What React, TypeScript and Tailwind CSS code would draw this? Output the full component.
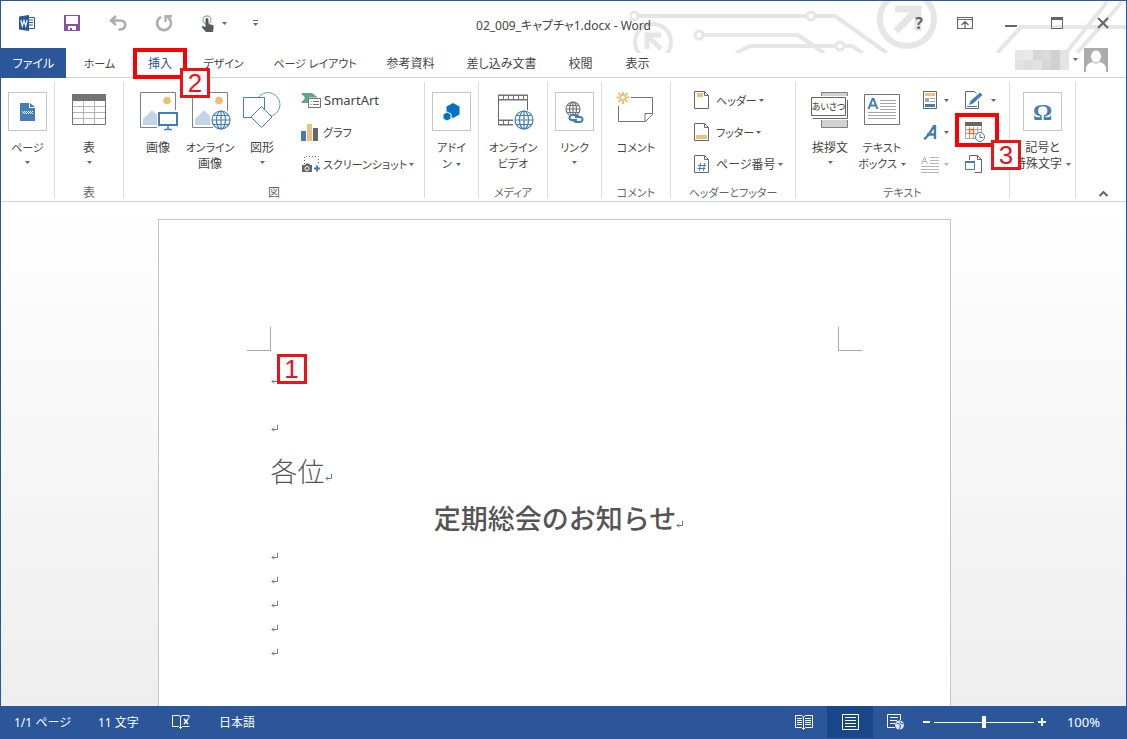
import React from "react";

type Kids = { children?: React.ReactNode };

const Caret = ({ color = "#666" }: { color?: string }) => (
  <svg width="5" height="3" viewBox="0 0 5 3" className="inline-block shrink-0" aria-hidden="true">
    <path d="M0 0h5L2.500 3z" fill={color} />
  </svg>
);

const Icon = ({ w, h, children }: Kids & { w: number; h: number }) => (
  <svg width={w} height={h} viewBox={`0 0 ${w} ${h}`} fill="none" className="shrink-0" aria-hidden="true">
    {children}
  </svg>
);

const Globe = ({ x, y, r, color }: { x: number; y: number; r: number; color: string }) => (
  <g stroke={color} strokeWidth="1.2" transform={`translate(${x} ${y})`}>
    <circle r={r} fill="#fff" />
    <ellipse rx={r * 0.5} ry={r} />
    <path d={`M0 ${-r}V${r}M${-r} 0H${r}M${-r * 0.85} ${-r * 0.5}H${r * 0.85}M${-r * 0.85} ${r * 0.5}H${r * 0.85}`} />
  </g>
);

const Photo = () => (
  <>
    <path d="M1.500.500h35v35h-35z" fill="#fff" stroke="#808080" />
    <circle cx="28" cy="8.500" r="3.800" fill="#ebbf74" />
    <path d="M4 33V27l9-9 10 10 3-3 6 8z" fill="#c2d4e8" />
  </>
);

/* ---------- quick access and window icons ---------- */

const WordLogo = () => (
  <Icon w={16} h={16}>
    <path d="M8 2.500h7.500v11H8" fill="#fff" stroke="#2b579a" />
    <path d="M10 5h4M10 7.500h4M10 10h4" stroke="#2b579a" />
    <path d="M0 1.500 10 0v16L0 14.500z" fill="#2b579a" />
    <path d="m1.800 5 1.500 6L5 5.500 6.700 11l1.500-6" stroke="#fff" strokeWidth="1.200" />
  </Icon>
);

const SaveIcon = () => (
  <Icon w={16} h={16}>
    <path d="M0 0h16v16H0z" fill="#8553a5" />
    <path d="M2 1h12v8H2zM4 11h8v4H4z" fill="#fff" />
    <path d="M6 13h2v2H6z" fill="#8553a5" />
  </Icon>
);

const UndoIcon = () => (
  <Icon w={18} h={16}>
    <path d="M7 1 2 5.500 7 10M2 5.500h9c7 0 7 8 0 9H9.500" stroke="#adadad" strokeWidth="2.600" />
  </Icon>
);

const RedoIcon = () => (
  <Icon w={18} h={18}>
    <path d="M6 2.800A7 7 0 1 0 12.500 3" stroke="#adadad" strokeWidth="2.600" />
    <path d="M10.500 8V2.200H17" stroke="#adadad" strokeWidth="2.200" />
  </Icon>
);

const TouchIcon = () => (
  <Icon w={16} h={17}>
    <circle cx="7" cy="5" r="4" stroke="#8bb4d9" strokeWidth="1.400" />
    <path d="M5.500 4.500a1.500 1.500 0 0 1 3 0V9l4 1q1.500.5 1.200 2L13 17H6l-4.500-5 1.200-1 2.800 1z" fill="#595959" />
  </Icon>
);

const Circuit = () => (
  <svg width="497" height="53" viewBox="0 0 497 53" fill="none" stroke="#e6e6e6" strokeWidth="4" className="pointer-events-none absolute -top-px -right-px" aria-hidden="true">
    <path d="M8 16h197l52 37M73 35h95l26 18M106 53l14-7h85M215 46h7l11 7M367 53l24-26h106M477 2l-41 51M492 2l-45 51" />
    <g fill="#fff" strokeWidth="3">
      <circle cx="4" cy="16" r="4" />
      <circle cx="181" cy="16" r="4" />
      <circle cx="69" cy="35" r="4" />
      <circle cx="210" cy="46" r="4" />
    </g>
    <circle cx="277" cy="19" r="27" fill="#fff" strokeWidth="6" />
    <path d="m266 31 21-21" strokeWidth="7" />
    <path d="M265 9h23v22" strokeWidth="7" />
    <circle cx="23" cy="42" r="18" fill="#fff" />
    <path d="M31 49 18 36M17 49V35h14" strokeWidth="5" />
    <path d="M496.500 0v53M0 .500h497" stroke="#2b579a" strokeWidth="1" />
  </svg>
);

/* ---------- ribbon icons ---------- */

const Framed = ({ children }: Kids) => (
  <span className="flex size-[39px] items-center justify-center border border-[#c6c6c6]">{children}</span>
);

const PageIcon = () => (
  <Framed>
    <Icon w={15} h={18}>
      <path d="M0 0h9v5h6v13H0z" fill="#447cb5" />
      <path d="m10 0 5 4h-5z" fill="#447cb5" />
      <path d="M2 8.500h11M2 10.500h11" stroke="#fff" strokeDasharray="1 1" />
      <path d="M3 9.500h9" stroke="#fff" strokeDasharray="1 1" />
    </Icon>
  </Framed>
);

const TableIcon = () => (
  <Icon w={34} h={40}>
    <path d="M.5 8.500h33v24H.5z" stroke="#737373" />
    <path d="M0 2h34v7H0z" fill="#737373" />
    <path d="M11.500 9v23M22.500 9v23M1 14.500h32M1 20.500h32M1 26.500h32" stroke="#b5b5b5" />
  </Icon>
);

const PictureIcon = () => (
  <Icon w={42} h={40}>
    <g transform="translate(2)">
      <Photo />
      <path d="M18 18h22v21H18z" fill="#fff" />
      <path d="M20 21h18v12H20z" stroke="#447cb5" strokeWidth="2" />
      <path d="M29 34v4M25 37.500h8" stroke="#447cb5" strokeWidth="1.500" />
    </g>
  </Icon>
);

const OnlinePictureIcon = () => (
  <Icon w={42} h={40}>
    <g transform="translate(2)">
      <Photo />
      <circle cx="30" cy="28" r="11" fill="#fff" />
      <Globe x={30} y={28} r={9} color="#447cb5" />
    </g>
  </Icon>
);

const ShapesIcon = () => (
  <Icon w={38} h={40}>
    <circle cx="25" cy="12.500" r="12" stroke="#6c9bca" fill="#fff" />
    <path d="M.5 5.500h21v20H.5z" fill="#fff" stroke="#447cb5" />
    <path d="M18.500 14.500 29 25 18.500 35.500 8 25z" fill="#fff" stroke="#447cb5" />
  </Icon>
);

const AddinIcon = () => (
  <Framed>
    <Icon w={17} h={18}>
      <path d="m10 0 6.500 3.500v8L10 15l-6.500-3.500v-8z" fill="#0072c6" />
      <path d="m4 9 4 2v5l-4 2-4-2v-5z" fill="#0072c6" stroke="#fff" />
    </Icon>
  </Framed>
);

const VideoIcon = () => (
  <Icon w={42} h={40}>
    <g transform="translate(6)">
      <path d="M.5 3v28M29.500 3v16" stroke="#666" />
      <path d="M0 2.500h30v6H0zM0 27.500h15v6H0z" fill="#737373" />
      <path d="M1 5.500h28M1 30.500h14" stroke="#fff" strokeWidth="3" strokeDasharray="4 1" />
      <circle cx="26" cy="28" r="10.500" fill="#fff" />
      <Globe x={26} y={28} r={9} color="#447cb5" />
    </g>
  </Icon>
);

const LinkIcon = () => (
  <Framed>
    <Icon w={20} h={22}>
      <Globe x={8} y={8} r={7} color="#737373" />
      <path d="M4 13h15v9H4z" fill="#fff" />
      <path d="M12 19H7a2.500 2.500 0 0 1 0-5h4a2.500 2.500 0 0 1 2.500 2M10 16h5a2.500 2.500 0 0 1 0 5h-4a2.500 2.500 0 0 1-2.500-2" stroke="#447cb5" strokeWidth="2" />
    </Icon>
  </Framed>
);

const CommentIcon = () => (
  <Icon w={40} h={40}>
    <path d="M15 5.500h21.500v17l-7 7H2.500V14M36 21.500h-7v8" stroke="#737373" />
    <path d="M7 -1v4M7 8v4M.5 5.500h4M9.500 5.500h4M2.500 1l3 3M8.500 7l3 3M11.500 1l-3 3M5.500 7l-3 3" stroke="#ebbf74" strokeWidth="2" />
    <circle cx="7" cy="5.500" r="2.500" fill="#fff" stroke="#ebbf74" strokeWidth="1.500" />
  </Icon>
);

const GreetingIcon = () => (
  <Icon w={38} h={40}>
    <path d="M10.500.500h26v35h-26z" fill="#d2d2d2" stroke="#808080" />
    <path d="M0 4h38v24H0z" fill="#fff" />
    <path d="M.5 5.500h34v18H.5z" stroke="#666" />
    <path d="M36.500 8v18.500H2" stroke="#666" />
    <text x="17.500" y="18" textAnchor="middle" fontSize="9" fill="#333">あいさつ</text>
  </Icon>
);

const TextBoxIcon = () => (
  <Icon w={37} h={40}>
    <path d="M.5 2.500h35v30H.5z" stroke="#737373" />
    <path d="m4.500 17 4-10h1l4 10M6 13.500h6" stroke="#447cb5" strokeWidth="2" />
    <path d="M16 8.500h16M16 11.500h16M16 14.500h16M16 17.500h16M4 20.500h28M4 23.500h28M4 26.500h28" stroke="#a6a6a6" />
  </Icon>
);

const OmegaIcon = () => (
  <Framed>
    <span className="font-['Liberation_Serif',serif] text-2xl leading-none font-bold text-[#447cb5]">Ω</span>
  </Framed>
);

const SmartArtIcon = () => (
  <Icon w={20} h={16}>
    <path d="M0 1h11l6 4.500H8V11H0l4-5z" fill="#5fa68c" />
    <path d="M7.500 6.500h12v9h-12z" fill="#fff" stroke="#737373" />
    <path d="M9.500 9.500h1M12 9.500h6M9.500 12.500h1M12 12.500h6" stroke="#737373" />
  </Icon>
);

const ChartIcon = () => (
  <Icon w={18} h={18}>
    <path d="M0 8h5v10H0z" fill="#447cb5" />
    <path d="M6 1h5v17H6z" fill="#e9c280" />
    <path d="M12 5h5v13h-5z" fill="#666" />
  </Icon>
);

const ScreenshotIcon = () => (
  <Icon w={20} h={18}>
    <path d="M3.500 9V1.500h14V10" stroke="#666" strokeDasharray="1 2" />
    <path d="M1 10h3l1-1.500h3L9 10h2v7H1z" fill="#666" />
    <circle cx="6" cy="13.500" r="2" stroke="#fff" />
    <path d="M13 13.500h6M16 10.500v6" stroke="#447cb5" strokeWidth="2" />
  </Icon>
);

const SheetIcon = ({ children }: Kids) => (
  <Icon w={15} h={18}>
    <path d="M.5.500h10l4 4v13H.5zM10.500.500v4h4" fill="#fff" stroke="#666" />
    {children}
  </Icon>
);

const HeaderIcon = () => <SheetIcon><path d="M3 2h6v4H3z" fill="#e9c280" /></SheetIcon>;
const FooterIcon = () => <SheetIcon><path d="M2 12h11v4H2z" fill="#e9c280" /></SheetIcon>;
const NumberIcon = () => (
  <SheetIcon><path d="m6.500 8-1 8M10.500 8l-1 8M4 10.500h8M3.500 13.500h8" stroke="#447cb5" /></SheetIcon>
);

const PartsIcon = () => (
  <Icon w={14} h={18}>
    <path d="M.5.500h13v17H.5z" fill="#fff" stroke="#666" />
    <path d="M2 2h10v3H2z" fill="#e9c280" />
    <path d="M2 7h4v4H2z" fill="#a6a6a6" />
    <path d="M7 7.500h5M7 10.500h5" stroke="#a6a6a6" />
    <path d="M2 13h10v3H2z" fill="#447cb5" />
  </Icon>
);

const WordArtIcon = () => (
  <Icon w={14} h={15}>
    <path d="M1 14C5 12 9 4 11 1h1v13M4 9.500h8" stroke="#447cb5" strokeWidth="2.400" />
  </Icon>
);

const DropCapIcon = () => (
  <Icon w={18} h={17}>
    <path d="m.5 8 3-7 3 7M1.500 5.500h4M9 1.500h9M9 4.500h9M9 7.500h9M0 10.500h18M0 13.500h18M0 16.500h18" stroke="#b5b5b5" />
  </Icon>
);

const SignatureIcon = () => (
  <Icon w={20} h={18}>
    <path d="M13.500 10v7.500H.5V.500h9l2 2" fill="#fff" stroke="#666" />
    <path d="m4 14 1.500-4L15 1.500l2.500 2.500L8 12.500z" fill="#447cb5" />
    <path d="M2 15.500h10" stroke="#447cb5" />
  </Icon>
);

const DateIcon = () => (
  <Icon w={20} h={20}>
    <path d="M.5.500h16v16H.5z" fill="#fff" stroke="#a6a6a6" />
    <path d="M0 0h17v4H0z" fill="#666" />
    <path d="M4.500 5v11M8.500 5v11M12.500 5v11M1 7.500h15M1 11.500h15" stroke="#a6a6a6" />
    <path d="M4.500 7.500h4v4h-4z" fill="#fff" stroke="#d8762d" strokeWidth="1.500" />
    <circle cx="15" cy="15" r="4.500" fill="#fff" stroke="#447cb5" />
    <path d="M15 12v3.500h3" stroke="#666" />
  </Icon>
);

const ObjectIcon = () => (
  <Icon w={20} h={18}>
    <path d="M4.500 5V.500h8l4 4v13h-7M12.500.500v4h4" stroke="#666" />
    <path d="M-.500 6.500h10v8h-10z" fill="#fff" />
    <path d="M.5 6.500h9v8h-9z" fill="#fff" stroke="#447cb5" />
    <path d="M0 6h10v2H0z" fill="#447cb5" />
  </Icon>
);

/* ---------- building blocks ---------- */

/* Labels written only in kana are set a size smaller than those with kanji. */
const isKana = (s: string) => /^[\u3040-\u30ff ]+$/.test(s);
const labelSize = (s: string) => (isKana(s) ? "text-[11px]" : "text-xs");

const Group = ({ width, label = "", children }: Kids & { width: string; label?: string }) => (
  <section className={`flex h-29 shrink-0 flex-col justify-between border-r border-[#dcdcdc] ${width}`}>
    <div className="flex">{children}</div>
    <div className={`text-center whitespace-nowrap text-[#666] ${labelSize(label)}`}>
      <span className="block h-3 leading-[14px]">{label}</span>
    </div>
  </section>
);

const Big = ({ icon, lines, caret, width = "w-full" }: { icon: React.ReactNode; lines: string[]; caret?: boolean; width?: string }) => (
  <button className={`flex shrink-0 flex-col items-center pt-2.5 ${width}`}>
    <span className="mb-2 flex h-10 items-start justify-center">{icon}</span>
    {lines.map((line, i) => (
      <span key={line} className={`flex h-4 items-center justify-center gap-1 whitespace-nowrap ${labelSize(line)}`}>
        {line}
        {caret && i === 1 && <Caret />}
      </span>
    ))}
    {caret && lines.length === 1 && <span className="flex h-3 items-center"><Caret /></span>}
  </button>
);

const Row = ({ icon, label, caret }: { icon: React.ReactNode; label: string; caret?: boolean }) => (
  <button className={`flex h-8 items-center whitespace-nowrap ${labelSize(label)}`}>
    <span className="flex w-[22px]">{icon}</span>
    <span className="pt-0.5">{label}</span>
    {caret && <span className="ml-0.5 flex"><Caret /></span>}
  </button>
);

const Small = ({ icon, label, caret, faded, gap = "ml-1", children }: Kids & { icon: React.ReactNode; label: string; caret?: boolean; faded?: boolean; gap?: string }) => (
  <button aria-label={label} className="relative flex h-8 items-center">
    <span className="flex w-5 justify-center">{icon}</span>
    {caret && <span className={`flex ${gap}`}><Caret color={faded ? "#b5b5b5" : "#666"} /></span>}
    {children}
  </button>
);

const Badge = ({ n, place }: { n: number; place: string }) => (
  <span className={`absolute z-20 flex size-[30px] items-center justify-center border-[3px] border-[#e8141c] bg-white font-['Liberation_Sans',sans-serif] text-[26px] leading-none text-[#e8141c] ${place}`}>
    {n}
  </span>
);

const Return = () => (
  <svg width="8" height="8" viewBox="0 0 8 8" fill="none" stroke="#777" className="inline-block shrink-0" aria-hidden="true">
    <path d="M6.500 0v4.500H1M3 2.500 1 4.500 3 6.500" />
  </svg>
);

const tabs: [string, string][] = [
  ["ホーム", "w-[67px]"],
  ["挿入", "w-[54px]"],
  ["デザイン", "w-[73px]"],
  ["ページ レイアウト", "w-[110px]"],
  ["参考資料", "w-[81px]"],
  ["差し込み文書", "w-[101px]"],
  ["校閲", "w-[57px]"],
  ["表示", "w-[57px]"],
];

const mosaic = [
  "bg-[#e6e6e6]", "bg-[#e9e9e9]", "bg-[#d6d6d6]", "bg-[#dadada]", "bg-[#d0d0d0]", "bg-[#e4e4e4]",
  "bg-[#e2e2e2]", "bg-[#dedede]", "bg-[#e2e2e2]", "bg-[#d6d6d6]", "bg-[#d0d0d0]", "bg-[#e4e4e4]",
];

const qat = "flex w-[46px] items-center justify-center";

export default function App() {
  return (
    <div className="flex min-h-screen flex-col border border-[#2b579a] bg-white font-['Noto_Sans','Noto_Sans_CJK_JP',sans-serif] text-xs text-[#444] [font-feature-settings:'palt']">
      <header className="relative">
        <Circuit />
        <div className="relative grid h-[47px] grid-cols-[1fr_auto_1fr]">
          <div className="flex pb-[3px] pl-[3px]">
            <span className="flex w-[45px] items-center justify-center"><WordLogo /></span>
            <button aria-label="上書き保存" className={qat}><SaveIcon /></button>
            <button aria-label="元に戻す" className={qat}><UndoIcon /></button>
            <button aria-label="繰り返し" className={qat}><RedoIcon /></button>
            <button aria-label="タッチ/マウス モードの切り替え" className="flex w-13 items-center justify-center gap-1.5"><TouchIcon /><Caret /></button>
            <button aria-label="クイック アクセス ツール バーのユーザー設定" className="flex w-8 flex-col items-center justify-center gap-0.5">
              <span className="h-px w-[5px] bg-[#666]" /><Caret />
            </button>
          </div>
          <h1 className="self-center pt-0.5">02_009_キャプチャ1.docx - Word</h1>
          <div className="flex justify-end pb-[3px] text-[#666]">
            <button aria-label="ヘルプ" className={`${qat} text-base font-bold`}>?</button>
            <button aria-label="リボンの表示オプション" className={qat}>
              <Icon w={16} h={12}><path d="M.5.500h15v11H.5zM.5 2.500h15M8 12V5M4.500 8 8 4.500 11.500 8" stroke="#666" strokeWidth="1.200" /></Icon>
            </button>
            <button aria-label="最小化" className={qat}><Icon w={12} h={8}><path d="M0 7h12" stroke="#666" strokeWidth="2" /></Icon></button>
            <button aria-label="最大化" className={qat}><Icon w={12} h={12}><path d="M.5 1v10.500h11V1" stroke="#666" /><path d="M0 1.500h12" stroke="#666" strokeWidth="3" /></Icon></button>
            <button aria-label="閉じる" className={qat}><Icon w={12} h={12}><path d="m1 1 10 10M11 1 1 11" stroke="#666" strokeWidth="2" /></Icon></button>
          </div>
        </div>

        <nav className="relative flex h-[30px] items-stretch border-b border-[#d4d4d4]" role="tablist">
          <button role="tab" className="-mb-px w-[65px] bg-[#2b579a] pt-0.5 text-white">ファイル</button>
          {tabs.map(([name, width]) => (
            <button key={name} role="tab" aria-selected={name === "挿入"} className={`relative shrink-0 pt-[3px] whitespace-nowrap ${labelSize(name)} ${width} ${name === "挿入" ? "text-[#2b579a]" : ""}`}>
              {name}
              {name === "挿入" && (
                <>
                  <span className="absolute inset-x-0 top-0 -bottom-0.5 z-10 border-4 border-[#fe0000]" />
                  <Badge n={2} place="top-5 left-[47px]" />
                </>
              )}
            </button>
          ))}
          <button className="mr-[18px] ml-auto flex items-start" aria-label="アカウント">
            <span className="grid grid-cols-6 pt-0.5">
              {mosaic.map((c, i) => <span key={i} className={`h-2.5 w-[9px] ${c}`} />)}
            </span>
            <span className="mx-1 flex pt-2.5"><Caret /></span>
            <span className="ml-0.5 flex">
              <Icon w={24} h={24}>
                <path d="M0 0h24v24H0z" fill="#ababab" />
                <path d="M2 24v-3c0-4 3-6 6-7h8c3 1 6 3 6 7v3z" fill="#fff" />
                <ellipse cx="12" cy="8.500" rx="5.500" ry="6.500" fill="#fff" stroke="#ababab" />
              </Icon>
            </span>
          </button>
        </nav>
      </header>

      <div className="flex h-31 items-start border-b border-[#d4d4d4] pt-1">
        <Group width="w-[54px]"><Big icon={<PageIcon />} lines={["ページ"]} caret /></Group>
        <Group width="w-[69px]" label="表"><Big icon={<TableIcon />} lines={["表"]} caret /></Group>
        <Group width="w-[301px]" label="図">
          <div className="flex pl-2">
            <Big width="w-[52px]" icon={<PictureIcon />} lines={["画像"]} />
            <Big width="w-[52px]" icon={<OnlinePictureIcon />} lines={["オンライン", "画像"]} />
            <Big width="w-[52px]" icon={<ShapesIcon />} lines={["図形"]} caret />
          </div>
          <div className="pt-0.5 pl-[13px]">
            <button className="flex h-8 items-center text-[13px]">
              <span className="flex w-[23px]"><SmartArtIcon /></span>
              <span className="pt-0.5">SmartArt</span>
            </button>
            <Row icon={<ChartIcon />} label="グラフ" />
            <Row icon={<ScreenshotIcon />} label="スクリーンショット" caret />
          </div>
        </Group>
        <Group width="w-[54px]"><Big icon={<AddinIcon />} lines={["アドイ", "ン"]} caret /></Group>
        <Group width="w-[69px]" label="メディア"><Big icon={<VideoIcon />} lines={["オンライン", "ビデオ"]} /></Group>
        <Group width="w-[54px]"><Big icon={<LinkIcon />} lines={["リンク"]} caret /></Group>
        <Group width="w-[69px]" label="コメント"><Big icon={<CommentIcon />} lines={["コメント"]} /></Group>
        <Group width="w-[125px]" label="ヘッダーとフッター">
          <div className="pt-0.5 pl-[23px]">
            <Row icon={<HeaderIcon />} label="ヘッダー" caret />
            <Row icon={<FooterIcon />} label="フッター" caret />
            <Row icon={<NumberIcon />} label="ページ番号" caret />
          </div>
        </Group>
        <Group width="w-[214px]" label="テキスト">
          <div className="flex pl-2">
            <Big width="w-[52px]" icon={<GreetingIcon />} lines={["挨拶文"]} caret />
            <Big width="w-[52px]" icon={<TextBoxIcon />} lines={["テキスト", "ボックス"]} caret />
          </div>
          <div className="pt-0.5 pl-3">
            <Small icon={<PartsIcon />} label="クイック パーツ" caret />
            <Small icon={<WordArtIcon />} label="ワードアート" caret />
            <Small icon={<DropCapIcon />} label="ドロップ キャップ" caret faded />
          </div>
          <div className="pt-0.5 pl-4">
            <Small icon={<SignatureIcon />} label="署名欄" caret gap="ml-1.5" />
            <Small icon={<DateIcon />} label="日付と時刻">
              <span className="absolute -top-[3px] -left-2.5 z-10 h-[34px] w-11 border-4 border-[#fe0000]" />
              <Badge n={3} place="top-6 left-[26px]" />
            </Small>
            <Small icon={<ObjectIcon />} label="オブジェクト" />
          </div>
        </Group>
        <Group width="w-[66px]"><Big icon={<OmegaIcon />} lines={["記号と", "特殊文字"]} caret /></Group>
        <button aria-label="リボンを折りたたむ" className="mr-[18px] mb-1 ml-auto self-end">
          <Icon w={9} h={6}><path d="m.5 5 4-4 4 4" stroke="#666" strokeWidth="2" /></Icon>
        </button>
      </div>

      <main className="flex flex-1 justify-center bg-linear-to-b from-white to-[#eee] pt-[17px] pr-[19px]">
        <article className="flex w-full max-w-[793px] flex-col border border-b-0 border-[#c6c6c6] bg-white pt-[107px] text-[#555]">
          <div className="flex justify-between px-[88px]">
            <span className="size-6 border-r border-b border-[#aaa]" />
            <span className="size-6 border-b border-l border-[#aaa]" />
          </div>
          <div className="px-28 pt-1.5 font-['Liberation_Serif','Noto_Sans_CJK_JP',serif] [font-feature-settings:normal]">
            <p className="relative flex h-12 items-center"><Return /><Badge n={1} place="-top-[3px] left-1.5" /></p>
            <p className="flex h-12 items-center"><Return /></p>
            <p className="flex h-10 items-center pt-0.5 text-[27px] font-light">各位<span className="flex pt-2"><Return /></span></p>
            <h2 className="flex h-13 items-center justify-center pt-1 pl-2.5 text-[27px] font-medium">定期総会のお知らせ<span className="flex pt-2"><Return /></span></h2>
            {[1, 2, 3, 4, 5].map((n) => <p key={n} className="flex h-6 items-center"><Return /></p>)}
          </div>
        </article>
      </main>

      <footer className="flex h-8 items-stretch bg-[#2b579a] text-white">
        <button className="w-[84px] pt-0.5 pl-[13px] text-left">1/1 ページ</button>
        <button className="w-[69px] pt-0.5 pl-[13px] text-left">11 文字</button>
        <button aria-label="文章校正" className="flex w-[53px] items-center justify-center">
          <Icon w={18} h={16}>
            <path d="M8.500 2.500 7 1.500H.5v11h6l2 2 2-2h7M8.500 2.500v12M8.500 2.500l2-1H17v3" stroke="#fff" />
            <path d="m12 5 4 5M16 5l-4 5" stroke="#fff" strokeWidth="1.500" />
          </Icon>
        </button>
        <button className="px-3 pt-0.5">日本語</button>
        <div className="ml-auto flex">
          <button aria-label="閲覧モード" className={qat}>
            <Icon w={18} h={15}>
              <path d="M8.500 2 6.500.500h-6v12h6l2 2 2-2h7V.500h-7zM8.500 2v12" stroke="#fff" />
              <path d="M2 3.500h5M2 5.500h5M2 7.500h5M2 9.500h5M10 3.500h6M10 5.500h6M10 7.500h6M10 9.500h6" stroke="#fff" />
            </Icon>
          </button>
          <button aria-label="印刷レイアウト" className={`${qat} bg-[#1a478a]`}>
            <Icon w={17} h={16}><path d="M.5.500h16v15H.5zM3 3.500h11M3 6.500h11M3 9.500h11M3 12.500h11" stroke="#fff" /></Icon>
          </button>
          <button aria-label="Web レイアウト" className={qat}>
            <Icon w={18} h={16}>
              <path d="M8 13.500H.500v-13h13V6M3 3.500h8M3 6.500h7M3 9.500h5" stroke="#fff" />
              <circle cx="12.500" cy="11" r="4.500" fill="#dfe8f5" />
              <path d="m9.500 9 3 1 1 2-1 3M13 7.500l1 2 2.500.500" stroke="#2b579a" />
            </Icon>
          </button>
          <button aria-label="縮小" className="ml-1 flex w-[11px] items-center"><Icon w={7} h={8}><path d="M0 4h7" stroke="#fff" strokeWidth="2" /></Icon></button>
          <input
            type="range"
            min="0"
            max="100"
            defaultValue="50"
            aria-label="ズーム"
            className="h-3 w-[100px] appearance-none self-center bg-[linear-gradient(#fff,#fff)] bg-[length:100%_1px] bg-center bg-no-repeat [&::-webkit-slider-thumb]:h-3 [&::-webkit-slider-thumb]:w-1 [&::-webkit-slider-thumb]:appearance-none [&::-webkit-slider-thumb]:bg-white"
          />
          <button aria-label="拡大" className="flex w-[15px] items-center justify-center"><Icon w={8} h={8}><path d="M0 4h8M4 0v8" stroke="#fff" strokeWidth="2" /></Icon></button>
          <button className="w-[77px] pt-0.5 pr-2 text-[13px]">100%</button>
        </div>
      </footer>
    </div>
  );
}
